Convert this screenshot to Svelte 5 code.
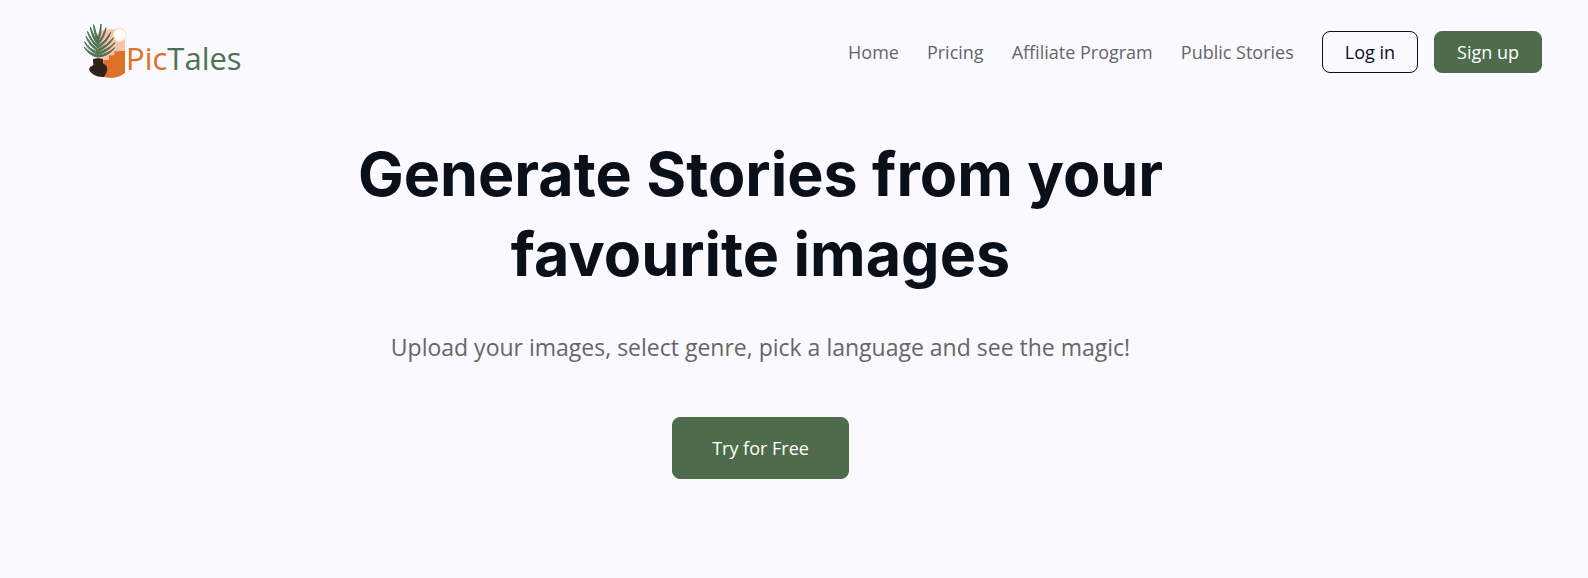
<script lang="ts">
  type NavLink = { label: string; href: string };

  const links: NavLink[] = [
    { label: "Home", href: "#home" },
    { label: "Pricing", href: "#pricing" },
    { label: "Affiliate Program", href: "#affiliate" },
    { label: "Public Stories", href: "#stories" },
  ];

  // palm leaflets, stem outwards: left side, then right side
  const leaflets = [
    "M65 122 Q40 119 24 92 Q42 112 65 117Z",
    "M65 114 Q37 103 25 76 Q42 100 65 108Z",
    "M65 105 Q37 86 30 60 Q44 84 65 99Z",
    "M65 95 Q43 76 34 45 Q48 73 65 89Z",
    "M65 85 Q47 64 43 32 Q53 61 66 78Z",
    "M66 75 Q54 57 53 25 Q60 52 67 67Z",
    "M65 122 Q98 120 116 94 Q96 113 65 117Z",
    "M65 114 Q97 107 117 79 Q95 100 65 108Z",
    "M65 105 Q97 93 113 64 Q92 88 66 99Z",
    "M66 95 Q94 79 104 48 Q88 76 66 89Z",
    "M66 85 Q86 65 90 34 Q80 62 67 78Z",
    "M67 74 Q77 55 75 23 Q71 48 67 66Z",
  ];
</script>

<div class="page">
  <header class="header">
    <a class="logo" href="#home" aria-label="PicTales">
      <svg class="logo-mark" viewBox="24 20 126 165" aria-hidden="true">
        <path
          d="M62 70 Q62 39 96 39 H112 Q147 39 147 72 V169 Q132 184 105 184 Q78 184 62 166Z"
          fill="#f9c2ac"
        />
        <path
          d="M82 145 V131 H99 V117 H115 V105 H131 V104 H147 V169 Q130 184 104 184 Q92 184 83 181Z"
          fill="#df7027"
        />
        <circle cx="131" cy="56" r="19" fill="#fff" stroke="#fae3c3" stroke-width="4" />
        <path d="M67 55 Q66 92 64 130" fill="none" stroke="#b59a72" stroke-width="2" />
        {#each leaflets as d}
          <path {d} fill="#4e7251" stroke="#4e7251" stroke-width="3" />
        {/each}
        <path
          d="M51 128 Q66 124 81 128 V141 Q94 147 94 160 Q90 174 84 182 Q66 183 56 177 Q41 168 39 158 Q40 152 52 146Z"
          fill="#302218"
        />
      </svg>
      <span class="logo-text"><span class="pic">Pic</span>Tales</span>
    </a>

    <nav class="nav">
      {#each links as link}
        <a class="nav-link" href={link.href}>{link.label}</a>
      {/each}
      <div class="actions">
        <button class="btn outline">Log in</button>
        <button class="btn filled">Sign up</button>
      </div>
    </nav>
  </header>

  <main class="hero">
    <h1>Generate Stories from your favourite images</h1>
    <p>Upload your images, select genre, pick a language and see the magic!</p>
    <button class="btn filled large">Try for Free</button>
  </main>
</div>

<style>
  :global(body) {
    margin: 0;
    background: #faf9ff;
  }

  .page {
    font-family: "Open Sans", sans-serif;
    color: #0a0f1a;
  }

  .header {
    display: flex;
    align-items: center;
    justify-content: space-between;
    padding: 23px 46px 0 84px;
  }
  .logo {
    display: flex;
    align-items: center;
    text-decoration: none;
    color: #4e7251;
  }
  .logo-mark {
    width: 42px;
    height: 55px;
  }
  .logo-text {
    font-size: 31px;
    line-height: 40px;
    padding-top: 14px;
  }
  .pic {
    color: #df7027;
  }

  .nav {
    display: flex;
    align-items: center;
    gap: 28px;
    padding-top: 2px;
  }
  .nav-link {
    color: #666;
    font-size: 18px;
    line-height: 28px;
    text-decoration: none;
  }
  .actions {
    display: flex;
    gap: 16px;
  }

  .btn {
    font-family: inherit;
    font-size: 18px;
    line-height: 28px;
    padding: 6px 22px;
    border: 1px solid #0a0f1a;
    border-radius: 8px;
    cursor: pointer;
  }
  .outline {
    background: transparent;
    color: #0a0f1a;
  }
  .filled {
    background: #4e6c4b;
    border-color: #4e6c4b;
    color: #fff;
  }
  .large {
    padding: 16px 39px;
  }

  .hero {
    display: flex;
    flex-direction: column;
    align-items: center;
    padding: 56px 67px 99px 0;
    text-align: center;
  }
  h1 {
    max-width: 900px;
    margin: 0;
    font-family: Inter, sans-serif;
    font-size: 61px;
    font-weight: 700;
    line-height: 80px;
  }
  p {
    margin: 35px 0 52px;
    color: #666;
    font-size: 23px;
    line-height: 36px;
  }
</style>
